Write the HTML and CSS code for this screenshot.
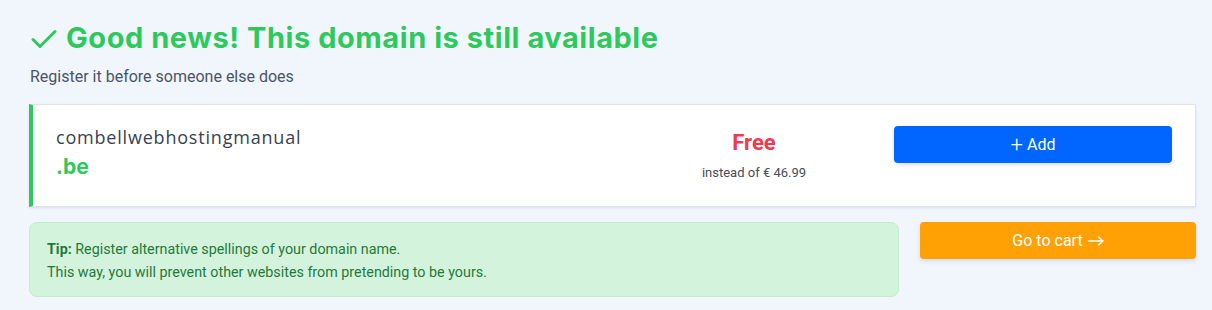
FILE: index.html
```html
<!DOCTYPE html>
<html lang="en">
<head>
<meta charset="utf-8">
<title>Domain available</title>
<link rel="stylesheet" href="styles.css">
</head>
<body>
<main class="page">
  <h1 class="title">
    <svg class="check" viewBox="0 0 26 20" width="26" height="20" aria-hidden="true"><path d="M2 10.5 L9 17.5 L24 2.5" fill="none" stroke="#2ec95c" stroke-width="3" stroke-linecap="round" stroke-linejoin="round"/></svg>
    <span>Good news! This domain is still available</span>
  </h1>
  <p class="subtitle">Register it before someone else does</p>

  <section class="card">
    <div class="domain">
      <div class="domain-name">combellwebhostingmanual</div>
      <div class="domain-ext">.be</div>
    </div>
    <div class="price">
      <div class="price-free">Free</div>
      <div class="price-old">instead of € 46.99</div>
    </div>
    <div class="action">
      <button class="btn btn-add"><span class="plus">+</span> Add</button>
    </div>
  </section>

  <div class="bottom">
    <div class="tip">
      <p><strong>Tip:</strong> Register alternative spellings of your domain name.</p>
      <p>This way, you will prevent other websites from pretending to be yours.</p>
    </div>
    <button class="btn btn-cart">Go to cart <svg class="arrow" viewBox="0 0 16 10" width="16" height="10" aria-hidden="true"><path d="M0.5 5 H15 M10.5 1 L15 5 L10.5 9" fill="none" stroke="#fff" stroke-width="1.4" stroke-linecap="round" stroke-linejoin="round"/></svg></button>
  </div>
</main>
</body>
</html>
```
FILE: styles.css
```css
* { box-sizing: border-box; }
html, body { margin: 0; padding: 0; }
body {
  background: #f1f6fd;
  font-family: Roboto, "Liberation Sans", sans-serif;
  width: 1212px;
  height: 310px;
  overflow: hidden;
}
.page {
  padding: 18px 16px 0 29px;
}
.title {
  margin: 0;
  display: flex;
  align-items: center;
  gap: 9px;
  font-family: Inter, "Noto Sans", sans-serif;
  font-weight: 700;
  font-size: 29px;
  line-height: 40px;
  color: #2ec95c;
  letter-spacing: 0.55px;
}
.check { flex: none; margin-left: 2px; margin-top: 1px; }
.subtitle {
  margin: 9px 0 0 1px;
  font-size: 16px;
  line-height: 20px;
  color: #4a5468;
}
.card {
  margin-top: 17px;
  height: 103px;
  background: #fff;
  border: 1px solid #dfe3ea;
  border-left: 4px solid #2ec95c;
  box-shadow: 0 1px 2px rgba(60, 70, 90, 0.12);
  display: flex;
  align-items: flex-start;
  padding: 21px 23px 0 23px;
}
.domain { flex: 1; padding-top: 0; }
.domain-name {
  font-family: "Open Sans", "Noto Sans", sans-serif;
  font-size: 18px;
  line-height: 22px;
  color: #3a4252;
  letter-spacing: 0.8px;
}
.domain-ext {
  margin-top: 7px;
  font-family: Inter, "Noto Sans", sans-serif;
  font-weight: 700;
  font-size: 21px;
  line-height: 24px;
  color: #2ec95c;
}
.price {
  width: 200px;
  margin-right: 40px;
  text-align: center;
  padding-top: 2px;
}
.price-free {
  font-weight: 700;
  font-size: 22px;
  line-height: 30px;
  color: #f2394d;
}
.price-old {
  margin-top: 7px;
  font-size: 13px;
  line-height: 16px;
  color: #454c58;
}
.action { width: 278px; }
.btn {
  border: 0;
  border-radius: 4px;
  color: #fff;
  font-family: Roboto, "Liberation Sans", sans-serif;
  font-size: 16px;
  cursor: pointer;
  box-shadow: 0 2px 4px rgba(40, 60, 90, 0.15);
}
.btn-add {
  width: 278px;
  height: 37px;
  background: #0066ff;
}
.plus { font-size: 22px; font-weight: 300; vertical-align: -2px; }
.bottom {
  margin-top: 15px;
  display: flex;
  gap: 21px;
  align-items: flex-start;
}
.tip {
  width: 870px;
  height: 75px;
  background: #d4f3dc;
  border: 1px solid #c2ebcb;
  border-radius: 8px;
  padding: 15px 0 0 17px;
  color: #1f7a3a;
  font-size: 14.3px;
  line-height: 23px;
}
.tip p { margin: 0; }
.tip strong { font-weight: 700; }
.btn-cart {
  width: 276px;
  height: 37px;
  background: #ffa005;
}
.arrow { vertical-align: 0; margin-left: 1px; }
```
